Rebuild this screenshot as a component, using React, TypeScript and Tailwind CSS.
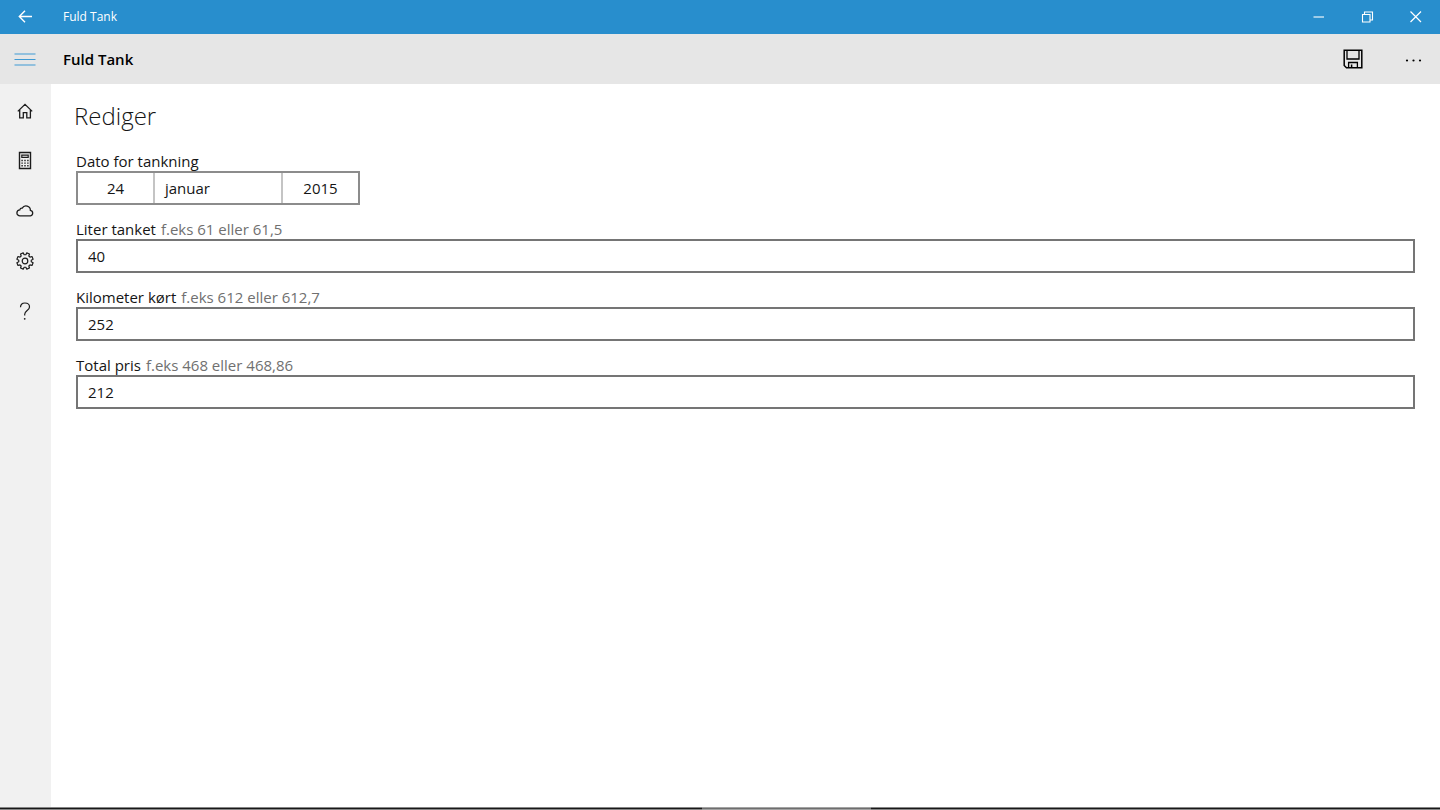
import { useState } from "react";
import type { ReactNode } from "react";

function Icon({ children, width = 20, height = 20 }: { children: ReactNode; width?: number; height?: number }) {
  return (
    <svg
      width={width}
      height={height}
      viewBox={`0 0 ${width} ${height}`}
      fill="none"
      stroke="currentColor"
      strokeWidth="1.2"
      aria-hidden="true"
    >
      {children}
    </svg>
  );
}

function TitleBar() {
  return (
    <header className="flex h-[34px] shrink-0 items-center bg-[#288ecd] text-white">
      <button aria-label="Tilbage" className="flex h-full w-[50px] items-center justify-center">
        <Icon>
          <path d="M17 9.500H4.500M10 3.800 4.300 9.500l5.700 5.700" strokeWidth="1.4" />
        </Icon>
      </button>
      <span className="pl-[13px] text-xs">Fuld Tank</span>
      <div className="ml-auto flex h-full">
        <button aria-label="Minimer" className="flex w-12 items-center justify-center">
          <Icon>
            <path d="M3.500 10h10.500" strokeWidth="1.1" />
          </Icon>
        </button>
        <button aria-label="Gendan" className="flex w-12 items-center justify-center">
          <Icon>
            <path d="M4.500 7.500h7.500v7.500h-7.500zM6.500 7.500v-2.500h8v8h-2.500" strokeWidth="1.1" />
          </Icon>
        </button>
        <button aria-label="Luk" className="flex w-12 items-center justify-center">
          <Icon>
            <path d="m4.500 4.500 10.500 10.500M15 4.500 4.500 15" strokeWidth="1.2" />
          </Icon>
        </button>
      </div>
    </header>
  );
}

function AppBar() {
  return (
    <div className="flex h-[50px] shrink-0 items-center bg-[#e6e6e6] text-black">
      <button aria-label="Menu" className="flex h-full w-[50px] items-center justify-center text-[#3f9ad3]">
        <Icon width={22} height={14}>
          <path d="M.5 2h21M.5 7.500h21M.5 13h21" />
        </Icon>
      </button>
      <h1 className="pl-[13px] text-[15px] font-semibold">Fuld Tank</h1>
      <div className="ml-auto flex h-full">
        <button aria-label="Gem" className="flex w-[62px] items-center justify-center">
          <Icon>
            <path d="M1.200 1.200h17.600v17.600H3.500l-2.300-2.300z" strokeWidth="1.500" />
            <path d="M4 1.200v8.800h12V1.200M5.600 18.800v-5.300h8.800v5.300" strokeWidth="1.300" />
            <path d="M8.600 15.500v3.300" strokeWidth="1.500" />
          </Icon>
        </button>
        <button aria-label="Mere" className="flex w-[56px] items-center justify-center pl-1">
          <Icon>
            <g fill="currentColor" stroke="none">
              <circle cx="3" cy="11.500" r="1.100" />
              <circle cx="9.500" cy="11.500" r="1.100" />
              <circle cx="16" cy="11.500" r="1.100" />
            </g>
          </Icon>
        </button>
      </div>
    </div>
  );
}

function gearPath() {
  const points: string[] = [];
  for (let i = 0; i < 8; i++) {
    const offsets: [number, number][] = [
      [-15, 6.3],
      [-10, 8.3],
      [10, 8.3],
      [15, 6.3],
    ];
    for (const [deg, r] of offsets) {
      const a = ((i * 45 + 22.5 + deg) * Math.PI) / 180;
      points.push(`${(10 + r * Math.cos(a)).toFixed(2)} ${(10 + r * Math.sin(a)).toFixed(2)}`);
    }
  }
  return `M${points.join("L")}Z`;
}

const navItems: { label: string; icon: ReactNode }[] = [
  {
    label: "Hjem",
    icon: (
      <Icon>
        <path d="M2.800 10.400 10 3.300l7.200 7.100M4.700 8.800v8h3.600v-5.200h3.500v5.200h3.600v-8" strokeWidth="1.300" />
      </Icon>
    ),
  },
  {
    label: "Beregner",
    icon: (
      <Icon>
        <path d="M4.500 1.500h11v16h-11z" strokeWidth="1.400" />
        <path d="M6.800 4.200h6.400v2.200H6.800z" />
        <path d="M6.400 9.500h7.400M6.400 12.100h7.400M6.400 14.700h7.400" strokeWidth="1.400" strokeDasharray="1.400 1.500" />
      </Icon>
    ),
  },
  {
    label: "Sky",
    icon: (
      <Icon>
        <path d="M5 14.800a3 3 0 0 1-.2-6 2.200 2.200 0 0 1 2.400-1.700 4.400 4.400 0 0 1 8.200 2.300 2.750 2.750 0 0 1 .1 5.400z" strokeWidth="1.300" />
      </Icon>
    ),
  },
  {
    label: "Indstillinger",
    icon: (
      <Icon>
        <path d={gearPath()} strokeLinejoin="round" />
        <circle cx="10" cy="10" r="2.800" />
      </Icon>
    ),
  },
  {
    label: "Hjælp",
    icon: (
      <Icon>
        <path d="M5.500 6.200C5.500 3.500 7.400 2 9.900 2c2.700 0 4.600 1.500 4.600 3.900 0 3.400-4.800 3.700-4.800 7.300v1.400" />
        <circle cx="9.700" cy="17.800" r=".9" fill="currentColor" stroke="none" />
      </Icon>
    ),
  },
];

function Sidebar() {
  return (
    <nav className="flex w-[51px] shrink-0 flex-col bg-[#f1f1f1] pt-[2px] pr-px text-[#1c1c1c]">
      {navItems.map((item) => (
        <a key={item.label} href="#" aria-label={item.label} className="flex h-[50px] items-center justify-center">
          {item.icon}
        </a>
      ))}
    </nav>
  );
}

function NumberField({ id, label, hint, initial }: { id: string; label: string; hint: string; initial: string }) {
  const [value, setValue] = useState(initial);
  return (
    <div className="flex flex-col">
      <label htmlFor={id} className="flex gap-[5px] leading-5">
        <span>{label}</span>
        <span className="text-[#707070]">{hint}</span>
      </label>
      <input
        id={id}
        inputMode="decimal"
        value={value}
        onChange={(e) => setValue(e.target.value)}
        className="h-[34px] w-full border-2 border-[#757575] bg-white px-[10px] outline-none"
      />
    </div>
  );
}

function StatusStrip() {
  return (
    <div className="flex h-[3px] shrink-0">
      <div className="grow-[702] basis-0 border-y border-[#858585] bg-[#181818]" />
      <div className="w-[169px] border-y border-[#a3a3a3] bg-[#6e6e6e]" />
      <div className="grow-[569] basis-0 border-y border-[#858585] bg-[#181818]" />
    </div>
  );
}

export default function App() {
  return (
    <div className="flex h-screen flex-col bg-white font-['Open_Sans','Noto_Sans',sans-serif] text-[15px] text-[#151515]">
      <TitleBar />
      <AppBar />
      <div className="flex min-h-0 flex-1">
        <Sidebar />
        <main className="flex-1 px-[25px] pt-4">
          <h2 className="-ml-[2px] text-2xl leading-8 font-[350]">Rediger</h2>
          <form className="mt-[19px] flex flex-col gap-[14px]">
            <div className="flex flex-col items-start">
              <label htmlFor="date" className="leading-5">
                Dato for tankning
              </label>
              <button
                id="date"
                type="button"
                className="flex h-[34px] w-[284px] items-stretch divide-x-2 divide-[#c4c4c4] border-2 border-[#8c8c8c] leading-[30px]"
              >
                <span className="w-[77px] text-center">24</span>
                <span className="flex-1 px-[10px] text-left">januar</span>
                <span className="w-[75px] text-center">2015</span>
              </button>
            </div>
            <NumberField id="liters" label="Liter tanket" hint="f.eks 61 eller 61,5" initial="40" />
            <NumberField id="kilometers" label="Kilometer kørt" hint="f.eks 612 eller 612,7" initial="252" />
            <NumberField id="price" label="Total pris" hint="f.eks 468 eller 468,86" initial="212" />
          </form>
        </main>
      </div>
      <StatusStrip />
    </div>
  );
}
